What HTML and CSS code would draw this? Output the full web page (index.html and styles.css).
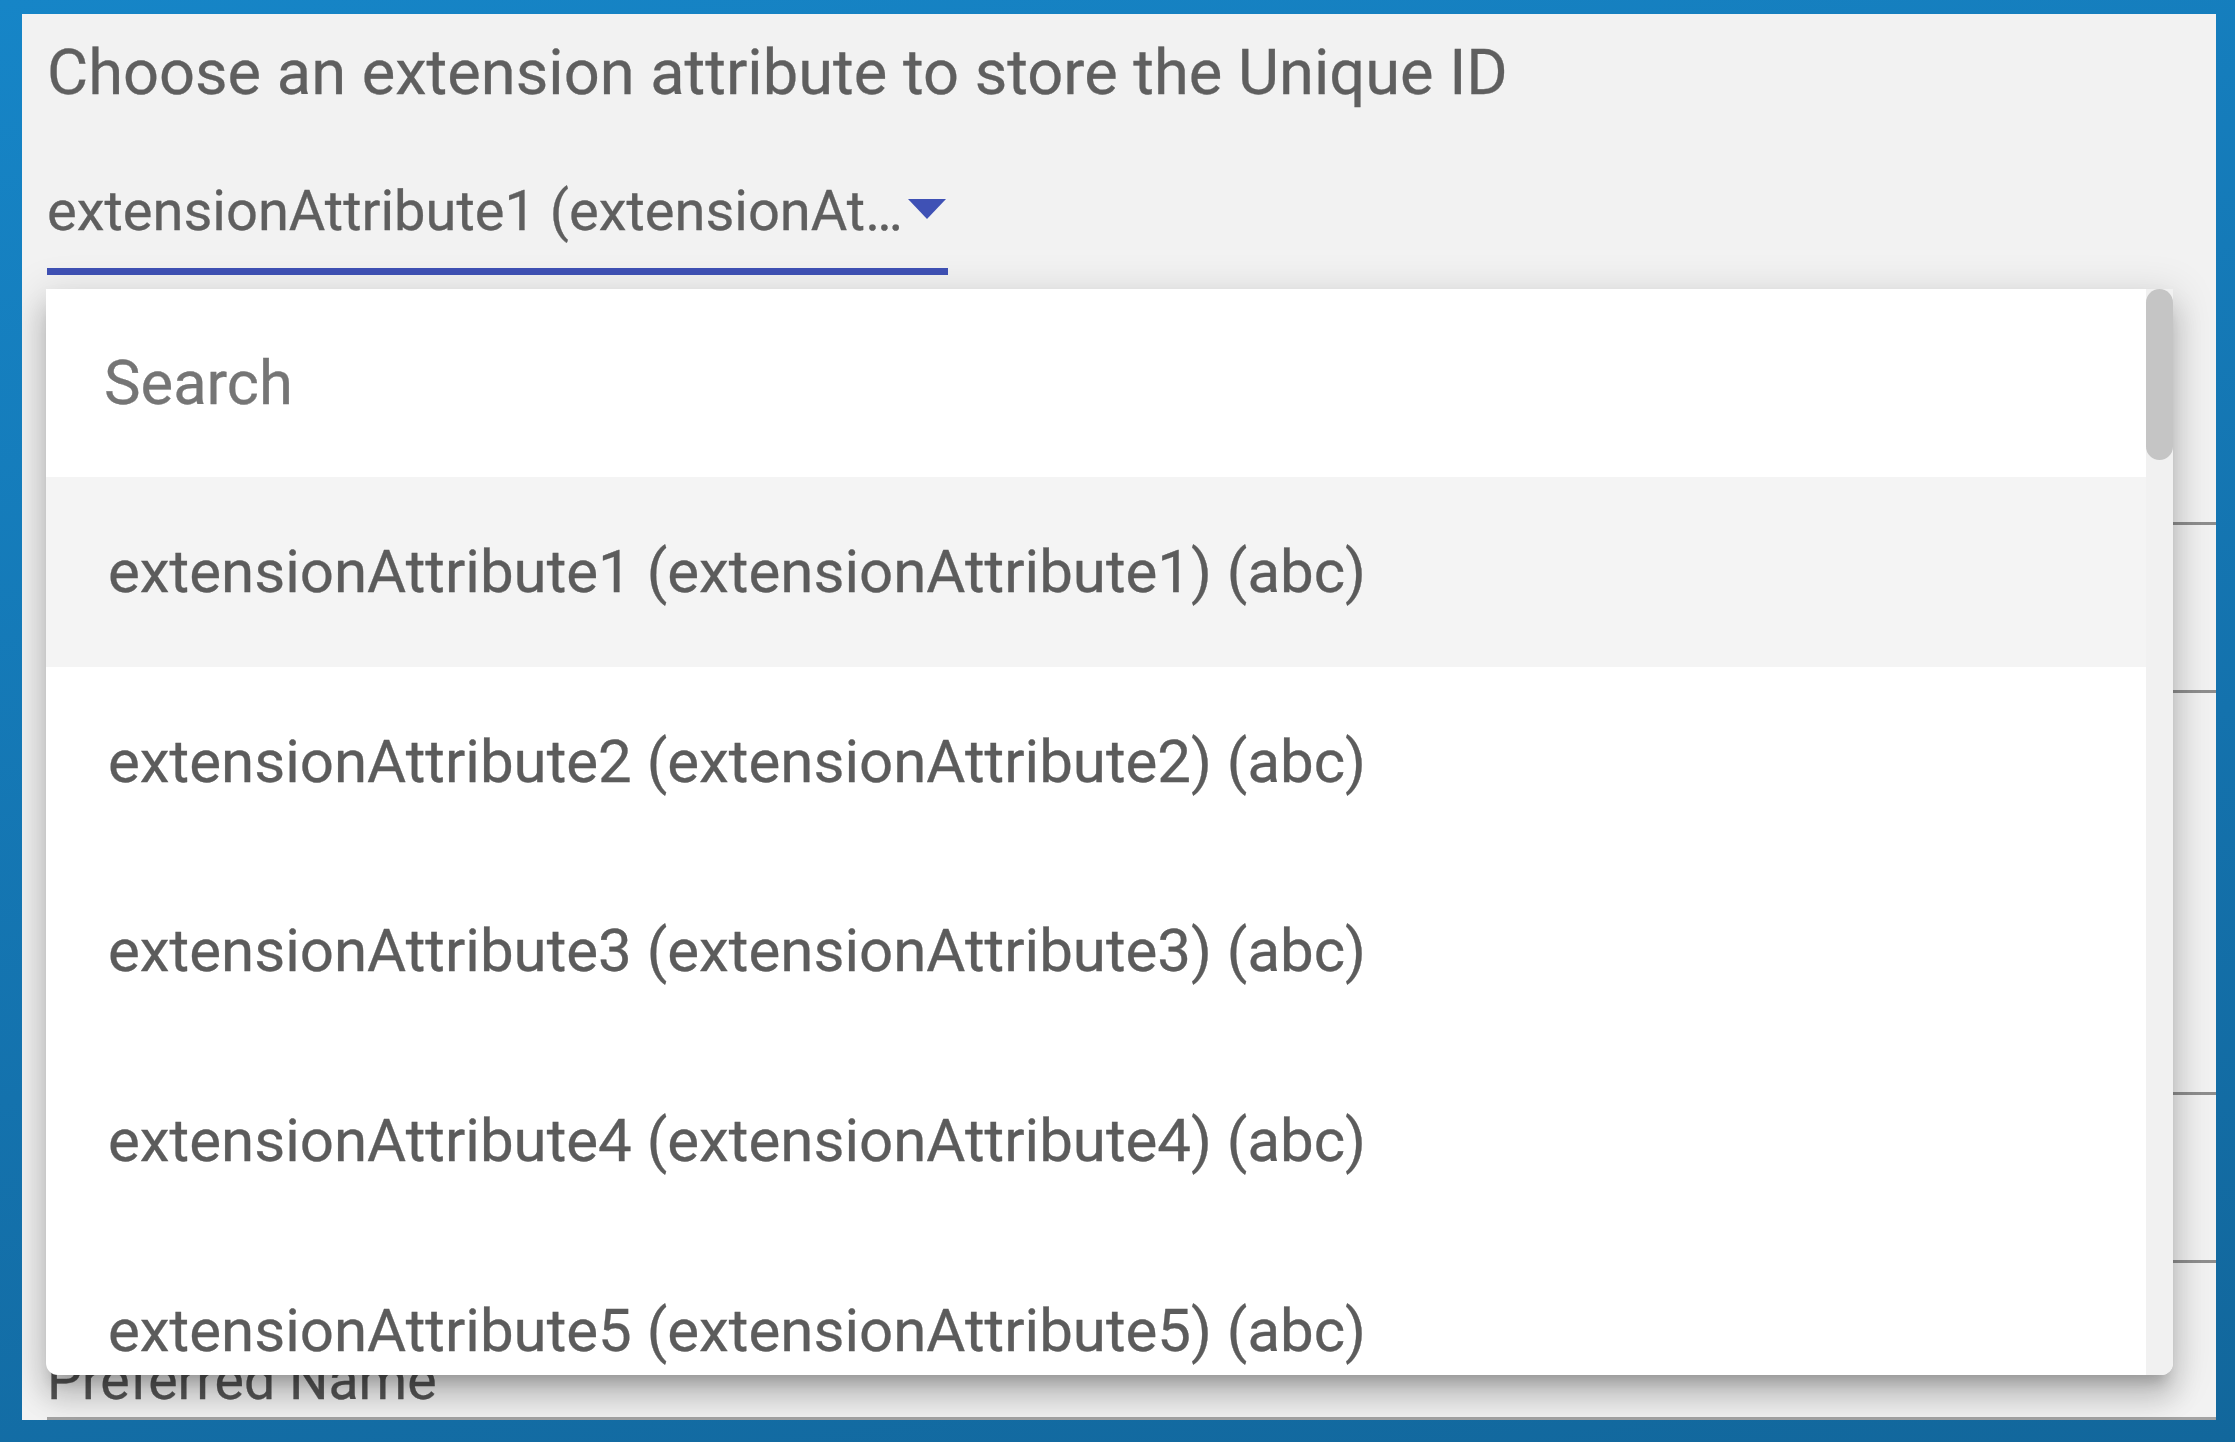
FILE: index.html
```html
<!DOCTYPE html>
<html lang="en">
<head>
<meta charset="utf-8">
<title>Choose extension attribute</title>
<link rel="stylesheet" href="styles.css">
</head>
<body>
<div class="frame">
  <div class="panel">
    <h1 class="title">Choose an extension attribute to store the Unique ID</h1>
    <div class="select">
      <span class="select-value">extensionAttribute1 (extensionAttribute1) (abc)</span>
      <span class="select-arrow"></span>
    </div>
    <div class="field f1"></div>
    <div class="field f2"></div>
    <div class="field f3"></div>
    <div class="field f4"></div>
    <div class="field f5"><span class="label">Preferred Name</span></div>

    <div class="dropdown">
      <div class="list">
        <div class="search">Search</div>
        <div class="option active">extensionAttribute1 (extensionAttribute1) (abc)</div>
        <div class="option">extensionAttribute2 (extensionAttribute2) (abc)</div>
        <div class="option">extensionAttribute3 (extensionAttribute3) (abc)</div>
        <div class="option">extensionAttribute4 (extensionAttribute4) (abc)</div>
        <div class="option">extensionAttribute5 (extensionAttribute5) (abc)</div>
      </div>
      <div class="scrollbar"><div class="thumb"></div></div>
    </div>
  </div>
</div>
</body>
</html>
```

FILE: styles.css
```css
html, body {
  margin: 0;
  padding: 0;
  height: 100%;
}
body {
  font-family: Roboto, "Liberation Sans", Arial, sans-serif;
  overflow: hidden;
}
.frame {
  box-sizing: border-box;
  height: 1442px;
  width: 2235px;
  padding: 14px 19px 22px 22px;
  background: linear-gradient(170deg, #1685c7 0%, #1472ad 60%, #12679c 100%);
}
.panel {
  position: relative;
  height: 100%;
  background: #f2f2f2;
  overflow: hidden;
  padding-left: 25px;
  box-sizing: border-box;
}
.title {
  margin: 0;
  padding-top: 21px;
  font-size: 63.2px;
  line-height: 74px;
  font-weight: 400;
  color: #5f5f5f;
  white-space: nowrap;
  -webkit-text-stroke: 0.3px #5f5f5f;
}
.select {
  margin-top: 69px;
  width: 901px;
  display: flex;
  align-items: flex-start;
  padding-bottom: 24px;
  border-bottom: 7px solid #3f51b5;
}
.select-value {
  width: 859px;
  flex: none;
  font-size: 56px;
  line-height: 66px;
  color: #5f5f5f;
  white-space: nowrap;
  overflow: hidden;
  text-overflow: ellipsis;
  -webkit-text-stroke: 0.3px #5f5f5f;
}
.select-arrow {
  flex: none;
  width: 0;
  height: 0;
  margin-left: 2px;
  margin-top: 21px;
  border-left: 19.5px solid transparent;
  border-right: 19.5px solid transparent;
  border-top: 20px solid #3f51b5;
}
.field {
  box-sizing: border-box;
  border-bottom: 3px solid #8e8e8e;
}
.f1 { height: 250px; }
.f2 { height: 168px; }
.f3 { height: 402px; }
.f4 { height: 168px; }
.f5 {
  height: 157px;
  display: flex;
  align-items: flex-end;
  padding-bottom: 3px;
  border-bottom-color: #a3a3a3;
}
.label {
  font-size: 55.4px;
  line-height: 66px;
  color: #555;
  -webkit-text-stroke: 0.3px #555;
}
.dropdown {
  position: absolute;
  top: 275px;
  left: 24px;
  width: 2127px;
  height: 1086px;
  display: flex;
  background: #fff;
  border-radius: 0 0 12px 12px;
  overflow: hidden;
  box-shadow: 0 14px 14px -8px rgba(0,0,0,.2), 0 23px 28px 3px rgba(0,0,0,.14), 0 8px 40px 6px rgba(0,0,0,.12);
}
.list {
  flex: 1;
  overflow: hidden;
}
.search {
  height: 188px;
  display: flex;
  align-items: center;
  padding-left: 58px;
  font-size: 61.5px;
  color: #757575;
  -webkit-text-stroke: 0.3px #757575;
}
.option {
  height: 189.6px;
  display: flex;
  align-items: center;
  padding-left: 62px;
  font-size: 60px;
  color: #5c5c5c;
  white-space: nowrap;
  -webkit-text-stroke: 0.3px #5c5c5c;
}
.option.active {
  background: #f4f4f4;
}
.scrollbar {
  width: 27px;
  background: #f1f1f1;
}
.thumb {
  height: 171px;
  background: #c5c5c5;
  border-radius: 14px;
}
```
